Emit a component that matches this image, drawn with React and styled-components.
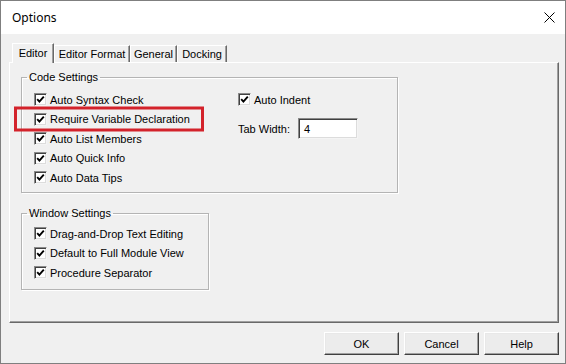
import styled, { createGlobalStyle } from "styled-components";

const GlobalStyle = createGlobalStyle`
 html, body {
  margin: 0;
  padding: 0;
  background: #ffffff;
 }
 body {
  font-family: "Liberation Sans", Arial, sans-serif;
  font-size: 11px;
  color: #000;
 }
`;

const codeLeft = [
 "Auto Syntax Check",
 "Require Variable Declaration",
 "Auto List Members",
 "Auto Quick Info",
 "Auto Data Tips",
];

const windowItems = [
 "Drag-and-Drop Text Editing",
 "Default to Full Module View",
 "Procedure Separator",
];

const tabs = [
 { label: "Editor", width: 42, active: true },
 { label: "Editor Format", width: 76 },
 { label: "General", width: 47 },
 { label: "Docking", width: 50 },
];

function Check({ label, highlight }) {
 return (
  <CheckRow>
   <Box>
    <svg width="11" height="11" viewBox="0 0 11 11">
     <path d="M2.2 5.2 L4.4 7.6 L8.8 2.6" fill="none" stroke="#000" strokeWidth="1.9" />
    </svg>
   </Box>
   <span>{label}</span>
   {highlight && <Highlight />}
  </CheckRow>
 );
}

export default function App() {
 return (
  <>
   <GlobalStyle />
   <Window>
    <TitleBar>
     <span>Options</span>
     <svg width="11" height="11" viewBox="0 0 11 11">
      <path d="M0.5 0.5 L10.5 10.5 M10.5 0.5 L0.5 10.5" stroke="#000" strokeWidth="1" />
     </svg>
    </TitleBar>

    <Body>
     <TabStrip>
      {tabs.map((t) => (
       <Tab key={t.label} $width={t.width} $active={t.active}>
        {t.label}
       </Tab>
      ))}
     </TabStrip>

     <Panel>
      <CodeGroup>
       <Legend>Code Settings</Legend>
       <CodeGrid>
        <Column>
         {codeLeft.map((l, i) => (
          <Check key={l} label={l} highlight={i === 1} />
         ))}
        </Column>
        <Column>
         <Check label="Auto Indent" />
         <TabWidthRow>
          <TabWidthLabel>Tab Width:</TabWidthLabel>
          <TextBox>4</TextBox>
         </TabWidthRow>
        </Column>
       </CodeGrid>
      </CodeGroup>

      <WindowGroup>
       <Legend>Window Settings</Legend>
       <Column $pad={4}>
        {windowItems.map((l) => (
         <Check key={l} label={l} />
        ))}
       </Column>
      </WindowGroup>
     </Panel>

     <Footer>
      <Button>OK</Button>
      <Button>Cancel</Button>
      <Button>Help</Button>
     </Footer>
    </Body>
   </Window>
  </>
 );
}

const Window = styled.div`
 width: 566px;
 height: 364px;
 box-sizing: border-box;
 border: 1px solid #7f7f7f;
 background: #f0f0f0;
 display: flex;
 flex-direction: column;
`;

const TitleBar = styled.div`
 height: 33px;
 flex: none;
 background: #ffffff;
 display: flex;
 align-items: center;
 justify-content: space-between;
 padding: 0 10px 0 11px;
 font-family: "Noto Sans", "Open Sans", sans-serif;
 font-size: 12px;

 span {
  margin-top: -1px;
 }
`;

const Body = styled.div`
 flex: 1;
 display: flex;
 flex-direction: column;
 padding: 9px 6px 8px 8px;
`;

const TabStrip = styled.div`
 display: flex;
 align-items: flex-end;
 height: 19px;
 padding-left: 3px;
 position: relative;
 z-index: 1;
`;

const Tab = styled.div`
 box-sizing: border-box;
 width: ${(p) => p.$width}px;
 height: ${(p) => (p.$active ? 20 : 17)}px;
 margin-bottom: ${(p) => (p.$active ? -1 : 0)}px;
 margin-left: ${(p) => (p.$active ? 0 : -0)}px;
 background: #f0f0f0;
 border-top: 1px solid #ffffff;
 border-left: 1px solid #ffffff;
 border-right: 1px solid #696969;
 box-shadow: inset -1px 0 0 #a0a0a0;
 display: flex;
 align-items: center;
 justify-content: center;
 padding-bottom: ${(p) => (p.$active ? 2 : 0)}px;
 white-space: nowrap;
`;

const Panel = styled.div`
 height: 261px;
 flex: none;
 box-sizing: border-box;
 border: 1px solid;
 border-color: #ffffff #696969 #696969 #ffffff;
 box-shadow: inset -1px -1px 0 #a0a0a0;
 padding: 8px 0 0 11px;
 display: flex;
 flex-direction: column;
 align-items: flex-start;
`;

const Group = styled.fieldset`
 box-sizing: border-box;
 margin: 0;
 padding: 0;
 border: 1px solid #b4b4b4;
 box-shadow: 1px 1px 0 #ffffff, inset 1px 1px 0 #ffffff;
 min-width: 0;
`;

const CodeGroup = styled(Group)`
 width: 377px;
 height: 122px;
`;

const WindowGroup = styled(Group)`
 width: 188px;
 height: 83px;
 margin-top: 14px;
`;

const Legend = styled.legend`
 margin-left: 5px;
 padding: 0 2px;
 line-height: 13px;
`;

const CodeGrid = styled.div`
 display: grid;
 grid-template-columns: 204px 1fr;
 padding: 6px 0 0 12px;
`;

const Column = styled.div`
 display: flex;
 flex-direction: column;
 padding: ${(p) => (p.$pad ? `${p.$pad}px 0 0 12px` : "0")};
`;

const CheckRow = styled.div`
 position: relative;
 height: 19.5px;
 display: flex;
 align-items: center;
 gap: 3px;
 white-space: nowrap;
`;

const Box = styled.span`
 box-sizing: border-box;
 width: 13px;
 height: 13px;
 flex: none;
 background: #ffffff;
 border: 1px solid;
 border-color: #8a8a8a #f4f4f4 #f4f4f4 #8a8a8a;
 box-shadow: inset 1px 1px 0 #404040, inset -1px -1px 0 #dcdcdc;
 display: flex;
 align-items: center;
 justify-content: center;

 svg {
  display: block;
 }
`;

const Highlight = styled.span`
 position: absolute;
 left: -20px;
 top: 50%;
 width: 190px;
 height: 25px;
 transform: translateY(-50%);
 box-sizing: border-box;
 border: 3px solid #d3222b;
 pointer-events: none;
`;

const TabWidthRow = styled.div`
 display: flex;
 align-items: center;
 margin-top: 8.5px;
`;

const TabWidthLabel = styled.span`
 width: 60px;
`;

const TextBox = styled.div`
 box-sizing: border-box;
 width: 60px;
 height: 21px;
 background: #ffffff;
 border: 1px solid;
 border-color: #8a8a8a #f4f4f4 #f4f4f4 #8a8a8a;
 box-shadow: inset 1px 1px 0 #404040, inset -1px -1px 0 #dcdcdc;
 padding: 0 5px;
 display: flex;
 align-items: center;
`;

const Footer = styled.div`
 display: flex;
 justify-content: flex-end;
 gap: 5px;
 margin-top: 9px;
`;

const Button = styled.button`
 box-sizing: border-box;
 width: 75px;
 height: 23px;
 padding: 0;
 font: inherit;
 font-size: 11px;
 color: #000;
 background: #ececec;
 border: 1px solid;
 border-color: #ffffff #404040 #404040 #ffffff;
 box-shadow: inset -1px -1px 0 #a0a0a0, inset 1px 1px 0 #e8e8e8;
 border-radius: 0;
`;
